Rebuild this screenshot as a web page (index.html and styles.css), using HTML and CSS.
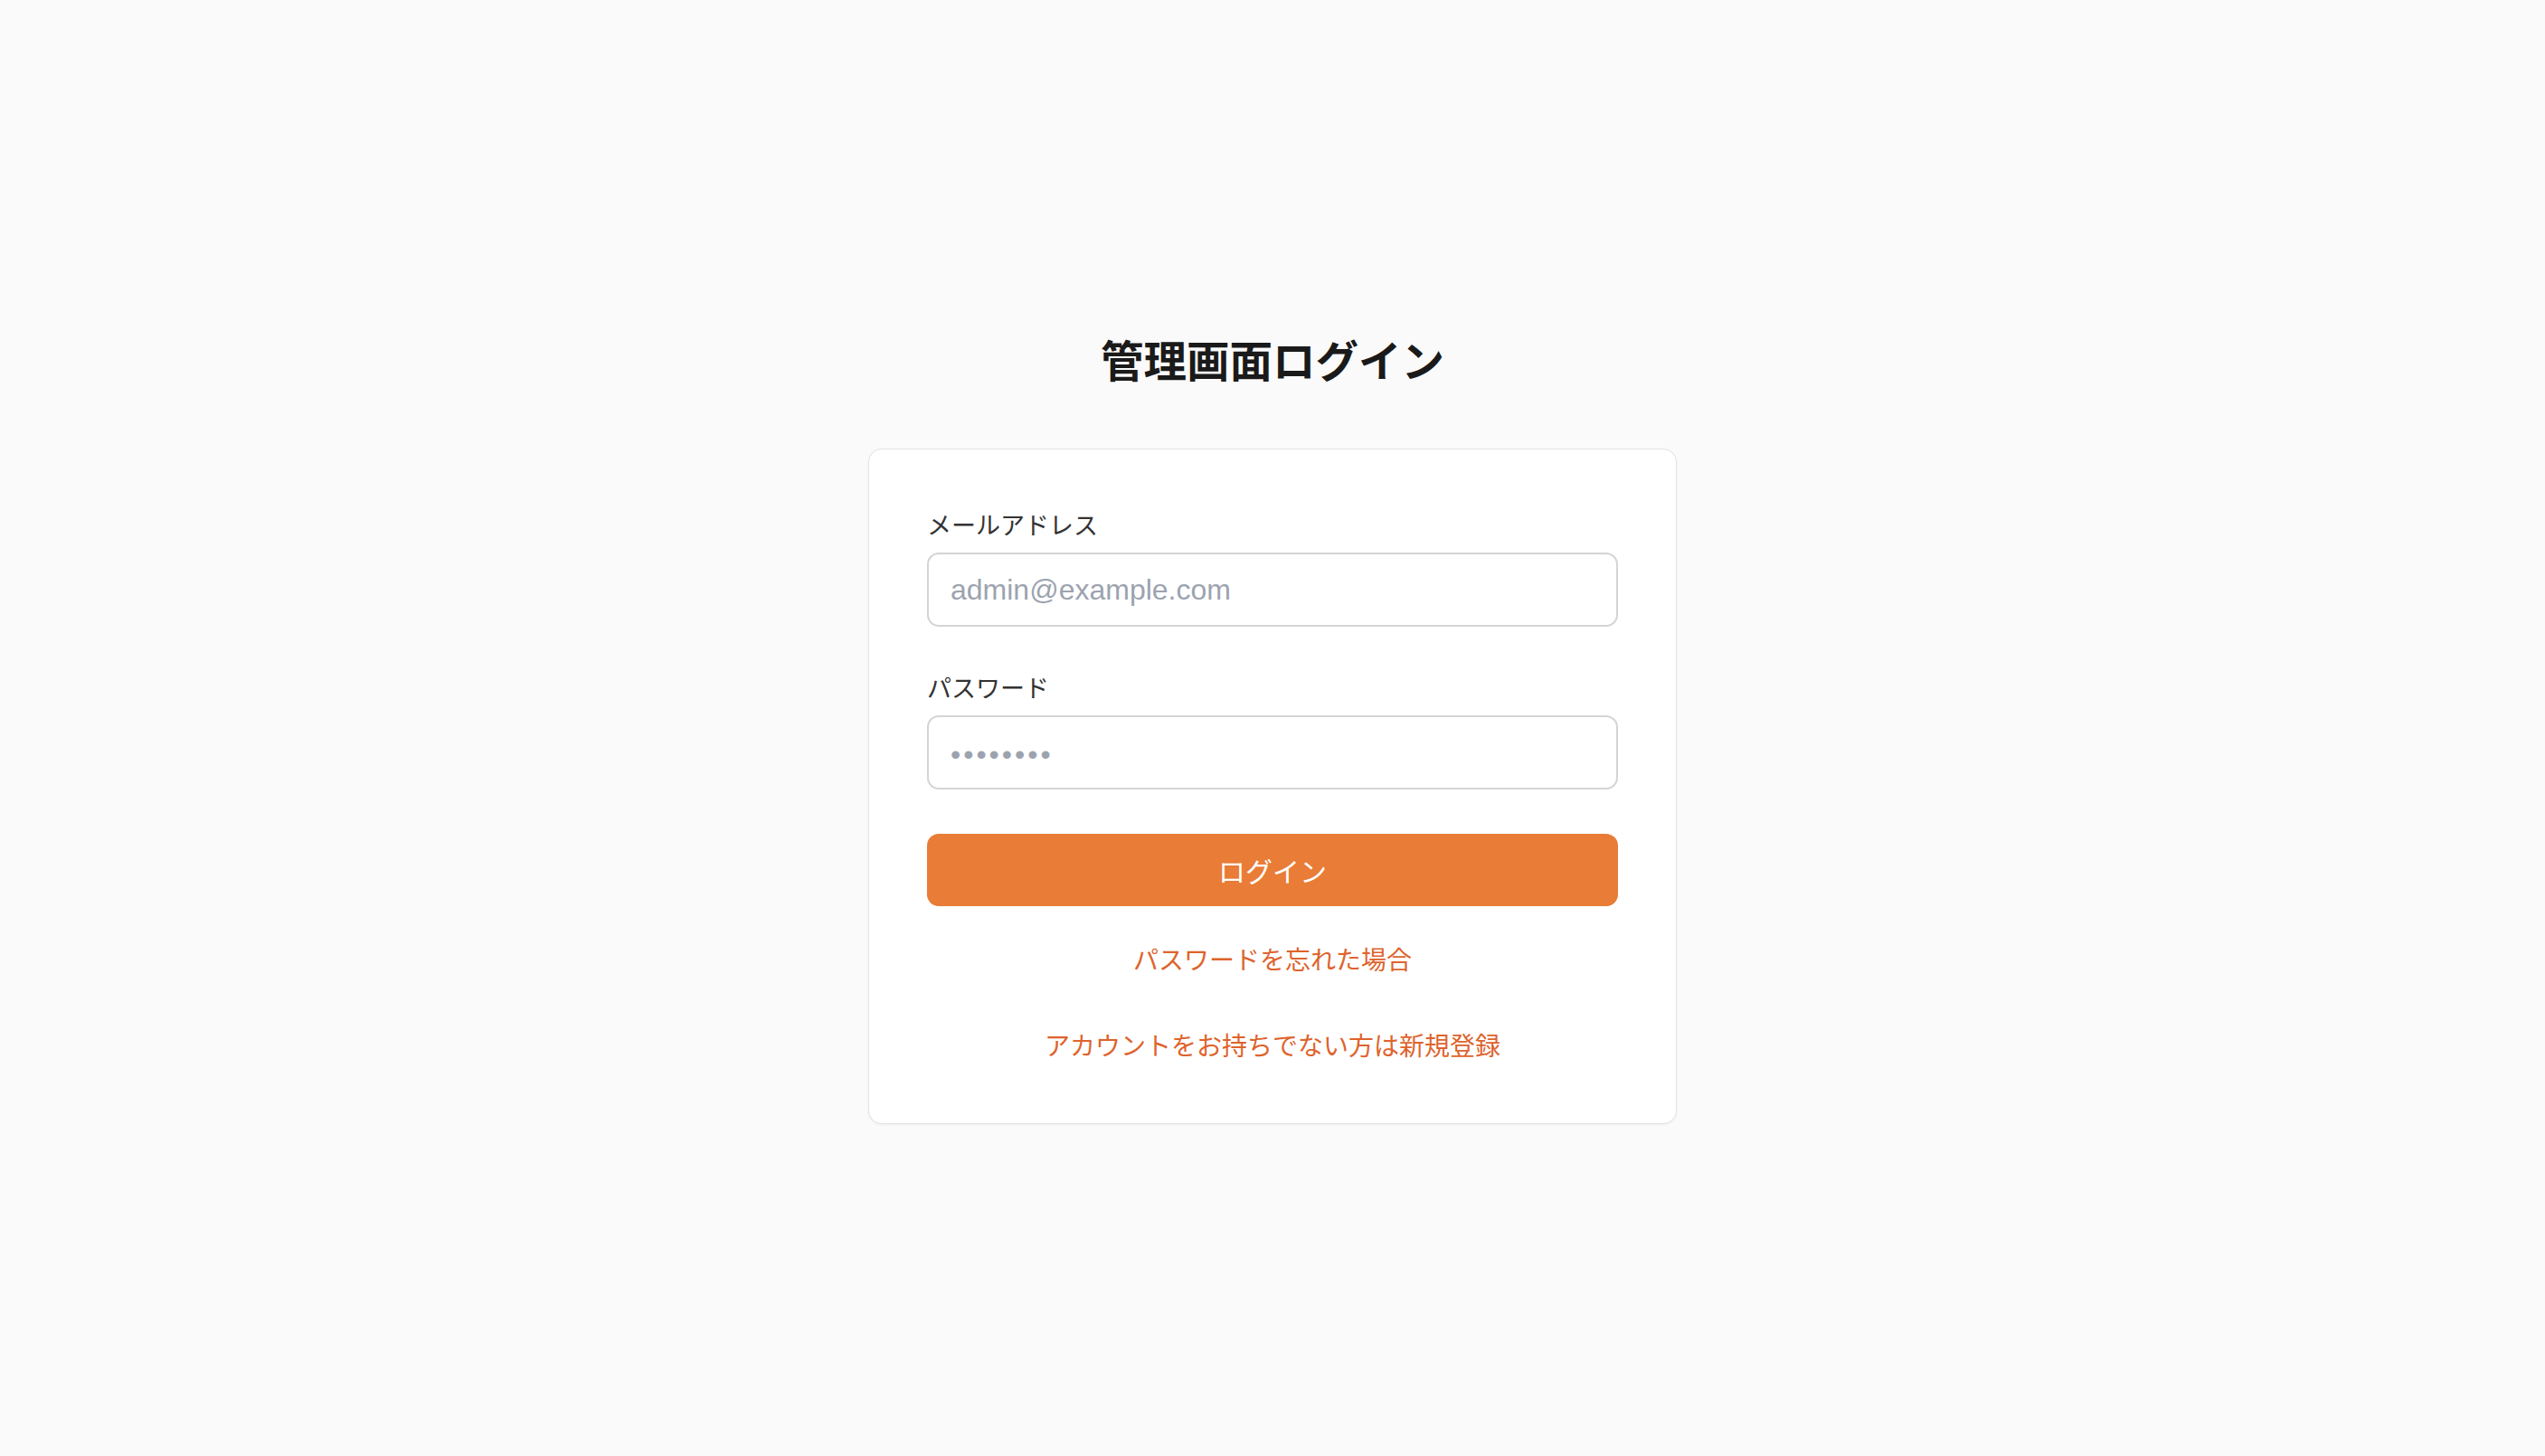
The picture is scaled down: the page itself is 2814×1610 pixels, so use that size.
FILE: index.html
```html
<!DOCTYPE html>
<html lang="ja">
<head>
<meta charset="utf-8">
<title>管理画面ログイン</title>
<link rel="stylesheet" href="styles.css">
</head>
<body>
<main class="page">
  <h1 class="title">管理画面ログイン</h1>
  <form class="card">
    <div class="field">
      <label class="label" for="email">メールアドレス</label>
      <input class="input" id="email" type="email" placeholder="admin@example.com">
    </div>
    <div class="field">
      <label class="label" for="password">パスワード</label>
      <input class="input input-password" id="password" type="password" placeholder="••••••••">
    </div>
    <button class="button" type="button">ログイン</button>
    <div class="links">
      <a class="link" href="#">パスワードを忘れた場合</a>
      <a class="link" href="#">アカウントをお持ちでない方は新規登録</a>
    </div>
  </form>
</main>
</body>
</html>
```
FILE: styles.css
```css
* { box-sizing: border-box; }
html, body { margin: 0; padding: 0; }
body {
  background: #fafafa;
  font-family: "Noto Sans CJK JP", "Noto Sans", sans-serif;
  color: #333333;
}
.page {
  min-height: 100vh;
  display: flex;
  flex-direction: column;
  align-items: center;
  justify-content: center;
}
.title {
  margin: 0 0 69px;
  font-size: 47.5px;
  line-height: 60px;
  font-weight: 700;
  color: #1a1a1a;
}
.card {
  width: 894px;
  background: #ffffff;
  border: 1px solid #e3e3e3;
  border-radius: 15px;
  box-shadow: 0 1px 3px rgba(0, 0, 0, 0.05);
  padding: 65px 64px 67px;
  display: flex;
  flex-direction: column;
}
.field {
  display: flex;
  flex-direction: column;
  margin-bottom: 49px;
}
.label {
  font-size: 27px;
  line-height: 36px;
  color: #333333;
  margin-bottom: 13px;
}
.input {
  height: 82px;
  border: 2px solid #d4d4d4;
  border-radius: 13px;
  padding: 0 24px;
  font-family: "Liberation Sans", Arial, sans-serif;
  font-size: 32px;
  color: #222222;
  background: #ffffff;
  outline: none;
}
.input::placeholder { color: #9ca3af; }
.input-password { padding-top: 4px; }
.input-password::placeholder { letter-spacing: 3px; }
.button {
  height: 80px;
  border: none;
  border-radius: 13px;
  background: #e97c36;
  color: #ffffff;
  font-family: "Noto Sans CJK JP", "Noto Sans", sans-serif;
  font-size: 30px;
  font-weight: 400;
  cursor: pointer;
}
.links {
  display: flex;
  flex-direction: column;
  align-items: center;
  gap: 55px;
  margin-top: 38px;
}
.link {
  font-size: 28px;
  line-height: 40px;
  color: #de632c;
  text-decoration: none;
}
```
